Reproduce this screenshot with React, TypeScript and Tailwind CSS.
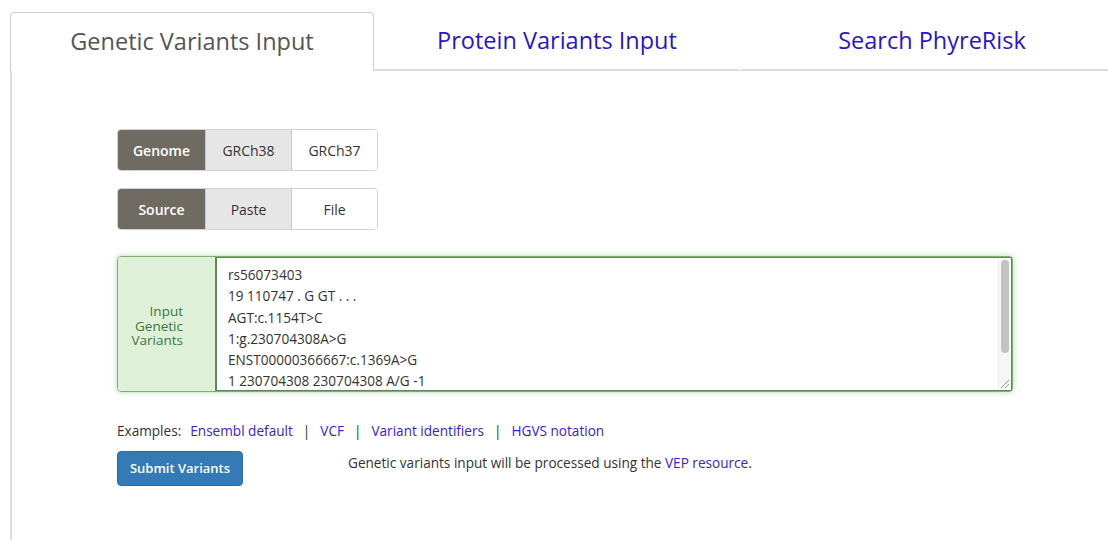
import React from "react";

const font = { fontFamily: '"Open Sans", "Noto Sans", Arial, sans-serif' };

const lines = [
  "rs56073403",
  "19 110747 . G GT . . .",
  "AGT:c.1154T>C",
  "1:g.230704308A>G",
  "ENST00000366667:c.1369A>G",
  "1 230704308 230704308 A/G -1",
];

function Toggle({ label, on, off }: { label: string; on: string; off: string }) {
  return (
    <div className="flex h-[42px] w-[261px] rounded-[4px] border border-[#d2d2d2] overflow-hidden text-[14px]">
      <div className="w-[87px] flex items-center justify-center bg-[#6f6a62] text-white font-semibold">
        {label}
      </div>
      <div className="w-[87px] flex items-center justify-center bg-[#e6e6e6] text-[#333] border-l border-r border-[#c8c8c8]">
        {on}
      </div>
      <div className="flex-1 flex items-center justify-center bg-white text-[#333]">{off}</div>
    </div>
  );
}

export default function App() {
  return (
    <div className="h-[542px] bg-white pl-[10px] pt-[12px] overflow-hidden" style={font}>
      {/* tab strip */}
      <div className="flex h-[59px] w-[1130px]">
        <div className="w-[364px] border border-b-0 border-[#cfcfcf] rounded-t-[4px] bg-white flex items-center justify-center text-[23.5px] text-[#555]">
          Genetic Variants Input
        </div>
        <div className="w-[366px] border-b-2 border-[#dcdcdc] flex items-center justify-center text-[23.5px] text-[#2a14cf]">
          Protein Variants Input
        </div>
        <div className="w-[382px] ml-[1px] border-b-2 border-[#dcdcdc] flex items-center justify-center text-[23.5px] text-[#2a14cf]">
          Search PhyreRisk
        </div>
      </div>

      {/* form panel */}
      <div className="border-l-2 border-[#dcdcdc] pl-[105px] pt-[58px] pb-[54px]">
        <div className="flex flex-col gap-[17px]">
          <Toggle label="Genome" on="GRCh38" off="GRCh37" />
          <Toggle label="Source" on="Paste" off="File" />
        </div>

        <div className="mt-[26px] flex w-[896px] h-[136px] rounded-[4px] border border-[#7fae73] shadow-[0_0_6px_rgba(90,170,80,0.45)]">
          <div className="w-[97px] bg-[#dff0d8] rounded-l-[4px] flex items-center justify-end pr-[32px] pt-[4px] text-right text-[13.5px] leading-[14.6px] text-[#3c763d]">
            <div>
              Input
              <br />
              Genetic
              <br />
              Variants
            </div>
          </div>
          <div className="relative flex-1 bg-white border-l-2 border-t border-b border-r border-[#5d8a55] pl-[11px] pt-[6px] text-[13.6px] leading-[21.3px] text-[#333]">
            {lines.map((l) => (
              <div key={l}>{l}</div>
            ))}
            {/* scrollbar */}
            <div className="absolute right-[1px] top-[1px] bottom-[1px] w-[12px] bg-[#f6f6f6] border-l border-[#ececec]">
              <div className="mx-auto mt-[1px] w-[8px] h-[93px] rounded-[4px] bg-[#c2c2c2]" />
            </div>
            <svg className="absolute right-[1px] bottom-[1px]" width="12" height="12" viewBox="0 0 12 12">
              <path d="M11 3 L3 11 M11 7 L7 11" stroke="#9a9a9a" strokeWidth="1" />
            </svg>
          </div>
        </div>

        <div className="mt-[29px] flex items-center text-[13.6px] text-[#333]">
          <span>Examples:</span>
          <span className="ml-[9px] text-[#3a22cc]">Ensembl default</span>
          <span className="mx-[10px]">|</span>
          <span className="text-[#3a22cc]">VCF</span>
          <span className="mx-[10px]">|</span>
          <span className="text-[#3a22cc]">Variant identifiers</span>
          <span className="mx-[10px]">|</span>
          <span className="text-[#3a22cc]">HGVS notation</span>
        </div>

        <div className="mt-[10px] flex items-start">
          <div className="w-[126px] h-[35px] rounded-[4px] bg-[#337ab7] border border-[#2e6da4] text-white text-[13px] font-semibold flex items-center justify-center">
            Submit Variants
          </div>
          <div className="ml-[105px] mt-[2px] text-[13.6px] text-[#333]">
            Genetic variants input will be processed using the{" "}
            <span className="text-[#3a22cc]">VEP resource</span>.
          </div>
        </div>
      </div>
    </div>
  );
}
